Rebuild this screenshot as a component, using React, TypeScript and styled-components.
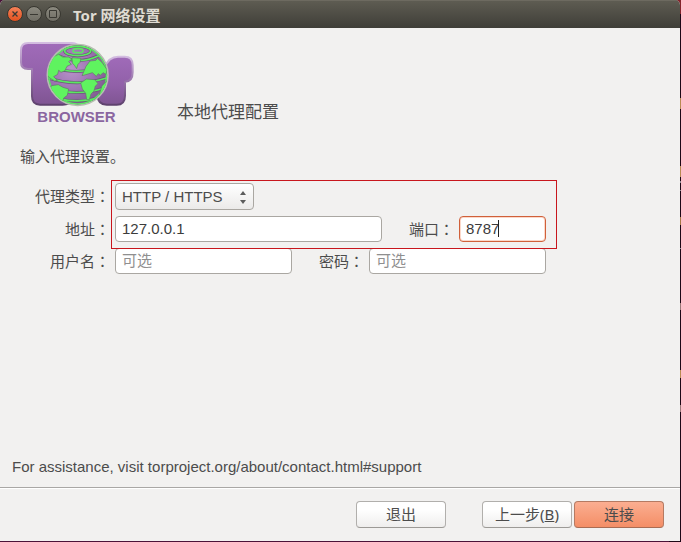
import React from "react";
import styled, { createGlobalStyle } from "styled-components";

const GlobalStyle = createGlobalStyle`
  * { box-sizing: border-box; }
  body {
    margin: 0;
    background: #1d0716;
    color: #4c4c4c;
    font: 15px/20px "Liberation Sans", "Noto Sans CJK SC", sans-serif;
  }
`;

const Desktop = styled.div`
  min-height: 100vh;
  display: flex;
  padding: 0 1px 1px 0;
  background:
    linear-gradient(#84232b 0 14px, #1d0716 14px 98px, #b98a52 98px 109px, #1d0716 109px 166px,
      #b98a52 166px 177px, #1d0716 177px 181px, #8e8790 181px 183px, #1d0716 183px 190px,
      #8e8790 190px 191px, #1d0716 191px 217px, #a87946 217px 225px, #1d0716 225px 248px,
      #8e8790 248px 249px, #1d0716 249px 303px, #9a7777 303px 310px, #1d0716 310px 370px,
      #b98a52 370px 378px, #1d0716 378px 405px, #9a7777 405px 412px, #1d0716 412px)
      right / 12px 100% no-repeat,
    #4a1238;
`;

const Window = styled.main`
  flex: 1;
  display: flex;
  flex-direction: column;
  background: #f2f1f0;
  border-radius: 5px 5px 0 0;
  overflow: hidden;
`;

const TitleBar = styled.header`
  height: 28px;
  display: flex;
  align-items: center;
  gap: 3px;
  padding: 0 7px;
  background: linear-gradient(#5f5d53, #3f3e38);
  box-shadow: inset 0 1px #6d6a60;
`;

const ControlButton = styled.button<{ $close?: boolean }>`
  width: 16px;
  height: 16px;
  padding: 0;
  border: 1px solid #383730;
  border-radius: 50%;
  background: ${(p) => (p.$close ? "linear-gradient(#f58158, #e4521f)" : "linear-gradient(#8b897f, #706e65)")};
  color: #3a3933;
  svg { display: block; width: 14px; height: 14px; }
`;

const Title = styled.h1`
  margin: 2px 0 0 9px;
  color: #dfdbd2;
  font: bold 15px/20px "Noto Sans", "Noto Sans CJK SC", sans-serif;
`;

const Content = styled.section`
  flex: 1;
  display: flex;
  flex-direction: column;
  padding: 14px 12px 10px;
`;

const Banner = styled.div`
  display: flex;
  align-items: flex-end;
  gap: 43px;
  padding-left: 8px;
`;

const Logo = styled.svg`
  display: block;
  width: 114px;
  height: 90px;
`;

const Heading = styled.h2`
  margin: 0 0 7px;
  font-size: 17px;
  line-height: 24px;
  font-weight: 400;
`;

const Intro = styled.p`
  margin: 15px 0 16px 8px;
`;

const Form = styled.form`
  display: flex;
  flex-direction: column;
  gap: 6px;
  max-width: 534px;
  padding-left: 8px;
`;

const Highlighted = styled.div`
  position: relative;
  display: flex;
  flex-direction: column;
  gap: 6px;
  &::after {
    content: "";
    position: absolute;
    inset: -3px -11px -7px 91px;
    border: 1px solid #c8161d;
    pointer-events: none;
  }
`;

const Row = styled.div`
  display: flex;
  align-items: center;
  gap: 5px;
`;

const Label = styled.label<{ $second?: boolean }>`
  width: ${(p) => (p.$second ? "72px" : "90px")};
  flex: none;
  margin-left: ${(p) => (p.$second ? "-5px" : "0")};
  text-align: right;
  white-space: nowrap;
`;

const Colon = styled.span`
  font-family: "Noto Sans CJK TC", sans-serif;
`;

const Input = styled.input<{ $short?: boolean }>`
  flex: ${(p) => (p.$short ? "0 0 87px" : "1 1 0")};
  min-width: 0;
  height: 26px;
  padding: 0 6px 2px;
  border: 1px solid #aaa7a2;
  border-radius: 4px;
  background: #fff;
  color: #3c3c3c;
  font: inherit;
  outline: none;
  &::placeholder { color: #8f8f8f; opacity: 1; }
`;

const PortField = styled.div`
  position: relative;
  flex: 0 0 87px;
  display: flex;
  &::after {
    content: "";
    position: absolute;
    left: 39px;
    top: 4px;
    width: 1px;
    height: 17px;
    background: #222;
  }
  ${Input} {
    border-color: #d0603a;
    box-shadow: inset 0 0 0 1px #fbd8ca;
  }
`;

const SelectBox = styled.div`
  position: relative;
  svg {
    position: absolute;
    right: 7px;
    top: 8px;
    pointer-events: none;
  }
`;

const Select = styled.select`
  display: block;
  appearance: none;
  width: 139px;
  height: 27px;
  padding: 0 24px 0 6px;
  border: 1px solid #aaa7a2;
  border-radius: 4px;
  background: linear-gradient(#fff, #ebeae9);
  color: #4c4c4c;
  font: inherit;
`;

const Help = styled.p`
  margin: auto 0 0;
`;

const Footer = styled.footer`
  display: flex;
  justify-content: flex-end;
  gap: 2px;
  padding: 13px 16px;
  border-top: 1px solid #a9a7a5;
  box-shadow: inset 0 1px #fff;
`;

const Button = styled.button<{ $primary?: boolean }>`
  min-width: 90px;
  height: 27px;
  padding: 0 12px 2px;
  border: 1px solid ${(p) => (p.$primary ? "#b57a62" : "#b1afac")};
  border-bottom-color: ${(p) => (p.$primary ? "#a96c53" : "#9c9a96")};
  border-radius: 4px;
  background: ${(p) => (p.$primary ? "linear-gradient(#fbae91, #f48e66)" : "linear-gradient(#fff 30%, #efeeed)")};
  color: #4c4c4c;
  font: 15px/20px "Noto Sans", "Noto Sans CJK SC", sans-serif;
  white-space: nowrap;
`;

const QuitButton = styled(Button)`
  margin-right: 34px;
`;

function TorLogo() {
  return (
    <Logo viewBox="30 21 342 270" role="img" aria-label="Tor Browser">
      <defs>
        <linearGradient id="purple" x1="0" y1="0" x2="0" y2="1">
          <stop offset="0" stopColor="#a06bb9" />
          <stop offset="0.6" stopColor="#9160a8" />
          <stop offset="1" stopColor="#7f5592" />
        </linearGradient>
        <linearGradient id="rim" x1="0" y1="0" x2="0" y2="1">
          <stop offset="0" stopColor="#d3bce0" />
          <stop offset="0.5" stopColor="#9873aa" />
          <stop offset="1" stopColor="#5f426e" />
        </linearGradient>
        <radialGradient id="globe" cx="0.4" cy="0.4" r="0.65">
          <stop offset="0" stopColor="#b994ca" />
          <stop offset="0.6" stopColor="#9a70af" />
          <stop offset="1" stopColor="#7b5a8a" />
        </radialGradient>
        <clipPath id="disc"><circle cx="203" cy="120" r="89" /></clipPath>
      </defs>
      <g fill="url(#purple)" stroke="url(#rim)" strokeWidth="6" strokeLinejoin="round">
        <path d="M54 24H186Q205 24 205 42V190Q178 209 158 209H90Q66 209 66 184V102H54Q33 102 33 82V46Q33 24 54 24Z" />
        <path d="M284 98Q296 65 324 65H344Q368 65 368 90V112Q368 140 345 140V182Q345 209 320 209H290Q263 209 263 180V98Z" />
      </g>
      <circle cx="203" cy="120" r="91" fill="url(#globe)" stroke="#b5bfb0" strokeWidth="5" />
      <g clipPath="url(#disc)">
        <g fill="none" stroke="#6d5579" strokeWidth="9">
          <ellipse cx="203" cy="48" rx="39" ry="14" />
          <path d="M144 61Q205 91 266 62M117 94Q202 126 290 91M112 128Q201 158 292 128M123 161Q201 185 284 159M144 190Q203 206 263 189" />
        </g>
        <g fill="none" stroke="#5ae861" strokeWidth="5">
          <circle cx="203" cy="120" r="87" />
          <ellipse cx="203" cy="48" rx="39" ry="14" />
          <ellipse cx="204" cy="47" rx="15" ry="6" />
          <path d="M144 61Q205 91 266 62M117 94Q202 126 290 91M112 128Q201 158 292 128M123 161Q201 185 284 159M144 190Q203 206 263 189" />
        </g>
        <g fill="#5ff35f" stroke="#65766b" strokeWidth="2">
          <path d="M146 58L158 66L176 66L186 72L176 80L184 88L171 94L164 108L153 112L146 106L143 118L131 125L142 136L134 138L118 128L110 118L116 88L130 65Z" />
          <path d="M186 68L213 70L210 82L204 88L200 101L194 92L187 84Z" />
          <path d="M124 152L145 149L159 157L176 162L172 181L161 189L158 201L150 205L132 191L118 170Z" />
          <path d="M216 122L228 94L240 78L258 76L262 70L276 82L291 104L288 118L279 113L271 121L265 116L259 124L247 113L231 118Z" />
          <path d="M212 144L229 132L254 134L264 146L256 153L252 168L243 177L238 194L230 194L227 175L217 162Z" />
          <path d="M276 152L294 135L290 160L278 180L268 178Z" />
        </g>
      </g>
      <text x="82" y="260" fill="#8b66a0" fontFamily="Liberation Sans, Arial, sans-serif" fontWeight="700" fontSize="45">BROWSER</text>
    </Logo>
  );
}

export default function App() {
  return (
    <>
      <GlobalStyle />
      <Desktop>
        <Window>
          <TitleBar>
            <ControlButton $close aria-label="关闭">
              <svg viewBox="0 0 14 14"><path d="M4.5 4.5l5 5m0-5l-5 5" stroke="currentColor" strokeWidth="1.3" /></svg>
            </ControlButton>
            <ControlButton aria-label="最小化">
              <svg viewBox="0 0 14 14"><path d="M3 7.5h8" stroke="currentColor" /></svg>
            </ControlButton>
            <ControlButton aria-label="最大化">
              <svg viewBox="0 0 14 14"><path d="M3.5 3.5h7v7h-7z" fill="none" stroke="currentColor" /></svg>
            </ControlButton>
            <Title>Tor 网络设置</Title>
          </TitleBar>
          <Content>
            <Banner>
              <TorLogo />
              <Heading>本地代理配置</Heading>
            </Banner>
            <Intro>输入代理设置。</Intro>
            <Form onSubmit={(e) => e.preventDefault()}>
              <Highlighted>
                <Row>
                  <Label htmlFor="type">代理类型<Colon>：</Colon></Label>
                  <SelectBox>
                    <Select id="type" defaultValue="http">
                      <option value="http">HTTP / HTTPS</option>
                    </Select>
                    <svg width="8" height="13" viewBox="0 0 8 13" fill="#5c5c5c">
                      <path d="M4 0L7 4H1zM4 13L1 9h6z" />
                    </svg>
                  </SelectBox>
                </Row>
                <Row>
                  <Label htmlFor="address">地址<Colon>：</Colon></Label>
                  <Input id="address" defaultValue="127.0.0.1" />
                  <Label $second htmlFor="port">端口<Colon>：</Colon></Label>
                  <PortField><Input $short id="port" defaultValue="8787" /></PortField>
                </Row>
              </Highlighted>
              <Row>
                <Label htmlFor="user">用户名<Colon>：</Colon></Label>
                <Input id="user" placeholder="可选" />
                <Label $second htmlFor="password">密码<Colon>：</Colon></Label>
                <Input id="password" type="password" placeholder="可选" />
              </Row>
            </Form>
            <Help>For assistance, visit torproject.org/about/contact.html#support</Help>
          </Content>
          <Footer>
            <QuitButton>退出</QuitButton>
            <Button>上一步(<u>B</u>)</Button>
            <Button $primary>连接</Button>
          </Footer>
        </Window>
      </Desktop>
    </>
  );
}
